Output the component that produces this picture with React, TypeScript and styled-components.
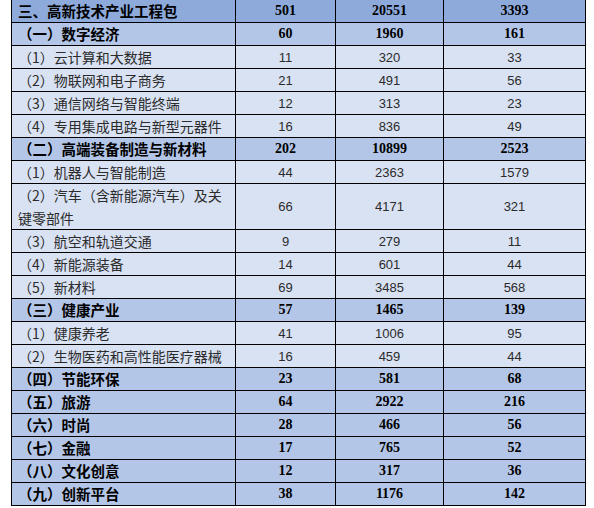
import { FC } from "react";
import styled, { createGlobalStyle } from "styled-components";

type Kind = "top" | "cat" | "sub";

interface IRow {
  name: string;
  a: string;
  b: string;
  c: string;
  kind: Kind;
  lines?: number;
}

const ROWS: IRow[] = [
  { name: "三、高新技术产业工程包", a: "501", b: "20551", c: "3393", kind: "top" },
  { name: "（一）数字经济", a: "60", b: "1960", c: "161", kind: "cat" },
  { name: "（1）云计算和大数据", a: "11", b: "320", c: "33", kind: "sub" },
  { name: "（2）物联网和电子商务", a: "21", b: "491", c: "56", kind: "sub" },
  { name: "（3）通信网络与智能终端", a: "12", b: "313", c: "23", kind: "sub" },
  { name: "（4）专用集成电路与新型元器件", a: "16", b: "836", c: "49", kind: "sub" },
  { name: "（二）高端装备制造与新材料", a: "202", b: "10899", c: "2523", kind: "cat" },
  { name: "（1）机器人与智能制造", a: "44", b: "2363", c: "1579", kind: "sub" },
  { name: "（2）汽车（含新能源汽车）及关键零部件", a: "66", b: "4171", c: "321", kind: "sub", lines: 2 },
  { name: "（3）航空和轨道交通", a: "9", b: "279", c: "11", kind: "sub" },
  { name: "（4）新能源装备", a: "14", b: "601", c: "44", kind: "sub" },
  { name: "（5）新材料", a: "69", b: "3485", c: "568", kind: "sub" },
  { name: "（三）健康产业", a: "57", b: "1465", c: "139", kind: "cat" },
  { name: "（1）健康养老", a: "41", b: "1006", c: "95", kind: "sub" },
  { name: "（2）生物医药和高性能医疗器械", a: "16", b: "459", c: "44", kind: "sub" },
  { name: "（四）节能环保", a: "23", b: "581", c: "68", kind: "cat" },
  { name: "（五）旅游", a: "64", b: "2922", c: "216", kind: "cat" },
  { name: "（六）时尚", a: "28", b: "466", c: "56", kind: "cat" },
  { name: "（七）金融", a: "17", b: "765", c: "52", kind: "cat" },
  { name: "（八）文化创意", a: "12", b: "317", c: "36", kind: "cat" },
  { name: "（九）创新平台", a: "38", b: "1176", c: "142", kind: "cat" },
];

const BG: Record<Kind, string> = {
  top: "#8eaadb",
  cat: "#b4c6e7",
  sub: "#d9e2f3",
};

const GlobalStyle = createGlobalStyle`
  html, body {
    margin: 0;
    padding: 0;
    background: #ffffff;
  }
`;

const Page = styled("div")`
  padding-left: 11px;
`;

const Table = styled("div")`
  width: 573px;
  display: flex;
  flex-direction: column;
  gap: 1px;
  background: #000;
  border: 1px solid #000;
  border-top: none;
`;

const Row = styled("div")<{ $lines: number }>`
  display: grid;
  grid-template-columns: 223px 99px 107px 141px;
  gap: 1px;
  height: ${(p) => p.$lines * 22 + (p.$lines - 1)}px;
`;

const NameCell = styled("div")<{ $kind: Kind }>`
  background: ${(p) => BG[p.$kind]};
  padding: 0 6px;
  overflow: hidden;
  line-height: 22.5px;
  font-family: "Noto Sans CJK SC", "Noto Sans", sans-serif;
  font-size: ${(p) => (p.$kind === "sub" ? "14px" : "14.5px")};
  font-weight: ${(p) => (p.$kind === "sub" ? 400 : 700)};
  color: ${(p) => (p.$kind === "sub" ? "#2b2b2b" : "#000")};
`;

const NumCell = styled("div")<{ $kind: Kind }>`
  background: ${(p) => BG[p.$kind]};
  display: flex;
  align-items: center;
  justify-content: center;
  overflow: hidden;
  font-family: ${(p) =>
    p.$kind === "sub"
      ? '"Liberation Sans Narrow", "Liberation Sans", sans-serif'
      : '"Liberation Serif", serif'};
  font-size: ${(p) => (p.$kind === "sub" ? "13px" : "14px")};
  font-weight: ${(p) => (p.$kind === "sub" ? 400 : 700)};
  color: ${(p) => (p.$kind === "sub" ? "#2b2b2b" : "#000")};
`;

const App: FC = () => {
  return (
    <Page>
      <GlobalStyle />
      <Table>
        {ROWS.map((row) => (
          <Row key={row.name} $lines={row.lines ?? 1}>
            <NameCell $kind={row.kind}>{row.name}</NameCell>
            <NumCell $kind={row.kind}>{row.a}</NumCell>
            <NumCell $kind={row.kind}>{row.b}</NumCell>
            <NumCell $kind={row.kind}>{row.c}</NumCell>
          </Row>
        ))}
      </Table>
    </Page>
  );
};

export default App;
